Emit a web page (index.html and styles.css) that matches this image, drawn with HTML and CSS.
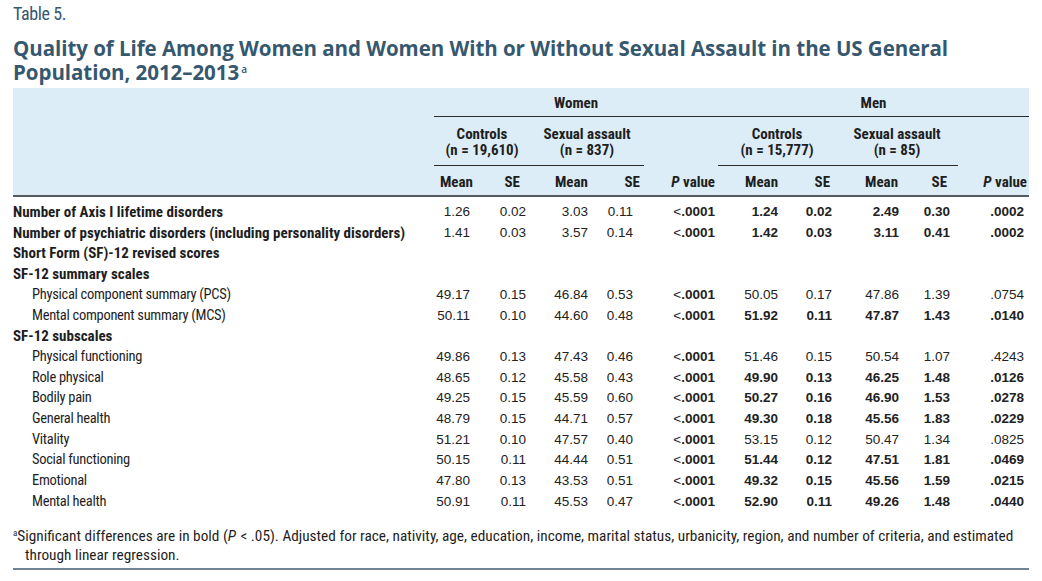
FILE: index.html
```html
<!DOCTYPE html>
<html lang="en">
<head>
<meta charset="utf-8">
<title>Table 5</title>
<link rel="stylesheet" href="styles.css">
</head>
<body>
<div class="page">
  <div class="table-label">Table 5.</div>
  <h1 class="title">Quality of Life Among Women and Women With or Without Sexual Assault in the US General Population, 2012–2013<sup>a</sup></h1>
  <table class="data">
    <colgroup>
      <col class="c-label">
      <col class="c1"><col class="c2"><col class="c3"><col class="c4"><col class="c5">
      <col class="c6"><col class="c7"><col class="c8"><col class="c9"><col class="c10">
    </colgroup>
    <thead>
      <tr class="h1">
        <th></th>
        <th colspan="5" class="grp g-women"><div class="rule">Women</div></th>
        <th colspan="5" class="grp g-men"><div class="rule">Men</div></th>
      </tr>
      <tr class="h2">
        <th></th>
        <th colspan="2" class="grp g-wc"><div class="rule">Controls<br>(n = 19,610)</div></th>
        <th colspan="2" class="grp g-ws"><div class="rule">Sexual assault<br>(n = 837)</div></th>
        <th></th>
        <th colspan="2" class="grp g-mc"><div class="rule">Controls<br>(n = 15,777)</div></th>
        <th colspan="2" class="grp g-ms"><div class="rule">Sexual assault<br>(n = 85)</div></th>
        <th></th>
      </tr>
      <tr class="h3">
        <th></th>
        <th class="k1">Mean</th><th class="k2">SE</th><th class="k3">Mean</th><th class="k4">SE</th><th class="k5"><i>P</i> value</th>
        <th class="k6">Mean</th><th class="k7">SE</th><th class="k8">Mean</th><th class="k9">SE</th><th class="k10"><i>P</i> value</th>
      </tr>
    </thead>
    <tbody>
      <tr>
        <td class="lab b">Number of Axis I lifetime disorders</td>
        <td class="n1">1.26</td><td class="n2">0.02</td><td class="n3">3.03</td><td class="n4">0.11</td><td class="n5">&lt;<b>.0001</b></td>
        <td class="n6 b">1.24</td><td class="n7 b">0.02</td><td class="n8 b">2.49</td><td class="n9 b">0.30</td><td class="n10 b">.0002</td>
      </tr>
      <tr>
        <td class="lab b">Number of psychiatric disorders (including personality disorders)</td>
        <td class="n1">1.41</td><td class="n2">0.03</td><td class="n3">3.57</td><td class="n4">0.14</td><td class="n5">&lt;<b>.0001</b></td>
        <td class="n6 b">1.42</td><td class="n7 b">0.03</td><td class="n8 b">3.11</td><td class="n9 b">0.41</td><td class="n10 b">.0002</td>
      </tr>
      <tr>
        <td class="lab b" colspan="11">Short Form (SF)-12 revised scores</td>
      </tr>
      <tr>
        <td class="lab b" colspan="11">SF-12 summary scales</td>
      </tr>
      <tr>
        <td class="lab ind">Physical component summary (PCS)</td>
        <td class="n1">49.17</td><td class="n2">0.15</td><td class="n3">46.84</td><td class="n4">0.53</td><td class="n5">&lt;<b>.0001</b></td>
        <td class="n6">50.05</td><td class="n7">0.17</td><td class="n8">47.86</td><td class="n9">1.39</td><td class="n10">.0754</td>
      </tr>
      <tr>
        <td class="lab ind">Mental component summary (MCS)</td>
        <td class="n1">50.11</td><td class="n2">0.10</td><td class="n3">44.60</td><td class="n4">0.48</td><td class="n5">&lt;<b>.0001</b></td>
        <td class="n6 b">51.92</td><td class="n7 b">0.11</td><td class="n8 b">47.87</td><td class="n9 b">1.43</td><td class="n10 b">.0140</td>
      </tr>
      <tr>
        <td class="lab b" colspan="11">SF-12 subscales</td>
      </tr>
      <tr>
        <td class="lab ind">Physical functioning</td>
        <td class="n1">49.86</td><td class="n2">0.13</td><td class="n3">47.43</td><td class="n4">0.46</td><td class="n5">&lt;<b>.0001</b></td>
        <td class="n6">51.46</td><td class="n7">0.15</td><td class="n8">50.54</td><td class="n9">1.07</td><td class="n10">.4243</td>
      </tr>
      <tr>
        <td class="lab ind">Role physical</td>
        <td class="n1">48.65</td><td class="n2">0.12</td><td class="n3">45.58</td><td class="n4">0.43</td><td class="n5">&lt;<b>.0001</b></td>
        <td class="n6 b">49.90</td><td class="n7 b">0.13</td><td class="n8 b">46.25</td><td class="n9 b">1.48</td><td class="n10 b">.0126</td>
      </tr>
      <tr>
        <td class="lab ind">Bodily pain</td>
        <td class="n1">49.25</td><td class="n2">0.15</td><td class="n3">45.59</td><td class="n4">0.60</td><td class="n5">&lt;<b>.0001</b></td>
        <td class="n6 b">50.27</td><td class="n7 b">0.16</td><td class="n8 b">46.90</td><td class="n9 b">1.53</td><td class="n10 b">.0278</td>
      </tr>
      <tr>
        <td class="lab ind">General health</td>
        <td class="n1">48.79</td><td class="n2">0.15</td><td class="n3">44.71</td><td class="n4">0.57</td><td class="n5">&lt;<b>.0001</b></td>
        <td class="n6 b">49.30</td><td class="n7 b">0.18</td><td class="n8 b">45.56</td><td class="n9 b">1.83</td><td class="n10 b">.0229</td>
      </tr>
      <tr>
        <td class="lab ind">Vitality</td>
        <td class="n1">51.21</td><td class="n2">0.10</td><td class="n3">47.57</td><td class="n4">0.40</td><td class="n5">&lt;<b>.0001</b></td>
        <td class="n6">53.15</td><td class="n7">0.12</td><td class="n8">50.47</td><td class="n9">1.34</td><td class="n10">.0825</td>
      </tr>
      <tr>
        <td class="lab ind">Social functioning</td>
        <td class="n1">50.15</td><td class="n2">0.11</td><td class="n3">44.44</td><td class="n4">0.51</td><td class="n5">&lt;<b>.0001</b></td>
        <td class="n6 b">51.44</td><td class="n7 b">0.12</td><td class="n8 b">47.51</td><td class="n9 b">1.81</td><td class="n10 b">.0469</td>
      </tr>
      <tr>
        <td class="lab ind">Emotional</td>
        <td class="n1">47.80</td><td class="n2">0.13</td><td class="n3">43.53</td><td class="n4">0.51</td><td class="n5">&lt;<b>.0001</b></td>
        <td class="n6 b">49.32</td><td class="n7 b">0.15</td><td class="n8 b">45.56</td><td class="n9 b">1.59</td><td class="n10 b">.0215</td>
      </tr>
      <tr>
        <td class="lab ind">Mental health</td>
        <td class="n1">50.91</td><td class="n2">0.11</td><td class="n3">45.53</td><td class="n4">0.47</td><td class="n5">&lt;<b>.0001</b></td>
        <td class="n6 b">52.90</td><td class="n7 b">0.11</td><td class="n8 b">49.26</td><td class="n9 b">1.48</td><td class="n10 b">.0440</td>
      </tr>
    </tbody>
  </table>
  <p class="footnote"><sup>a</sup>Significant differences are in bold (<i>P</i> &lt; .05). Adjusted for race, nativity, age, education, income, marital status, urbanicity, region, and number of criteria, and estimated through linear regression.</p>
</div>
</body>
</html>
```

FILE: styles.css
```css
html, body {
  margin: 0;
  padding: 0;
  background: #ffffff;
}

.page {
  width: 1016px;
  padding: 4px 0 0 13px;
  color: #1f1f1f;
  font-family: "Roboto", "DejaVu Sans Condensed", sans-serif;
  font-stretch: condensed;
}

.table-label {
  font-size: 18px;
  line-height: 20px;
  height: 20px;
  color: #36586f;
  letter-spacing: -0.4px;
}

.title {
  margin: 12px 0 0 0;
  font-family: "Open Sans", "Liberation Sans", sans-serif;
  font-stretch: normal;
  font-weight: 700;
  font-size: 20.5px;
  line-height: 24px;
  color: #36586f;
  letter-spacing: -0.05px;
}

.title sup {
  margin-left: 2px;
  font-size: 10px;
  line-height: 0;
  vertical-align: 7px;
  font-weight: 600;
}

.data {
  margin-top: 4px;
  width: 1016px;
  table-layout: fixed;
  border-collapse: separate;
  border-spacing: 0;
}

.c-label { width: 421px; }
.c1 { width: 40px; }
.c2 { width: 56px; }
.c3 { width: 62px; }
.c4 { width: 52px; }
.c5 { width: 74px; }
.c6 { width: 64px; }
.c7 { width: 54px; }
.c8 { width: 67px; }
.c9 { width: 55px; }
.c10 { width: 71px; }

.data thead {
  background: #dcedf7;
}

.data th {
  padding: 0;
  font-weight: 700;
  font-size: 15px;
  line-height: 16px;
  color: #1e1e1e;
  white-space: nowrap;
  vertical-align: bottom;
}

.grp { text-align: center; }
.grp .rule { border-bottom: 1px solid #2b2b2b; }

.h1 th { padding-top: 7px; }
.h1 .rule { padding-bottom: 5px; }
.g-women { padding-left: 3px; padding-right: 2px; }
.g-men { padding-left: 24px; padding-right: 0; }

.h2 th { padding-top: 9px; }
.h2 .rule { padding-bottom: 7px; }
.g-wc { padding-left: 3px; padding-right: 2px; }
.g-ws { padding-left: 24px; padding-right: 0; }
.g-mc { padding-left: 24px; padding-right: 0; }
.g-ms { padding-left: 27px; padding-right: 1px; }

.h3 th {
  padding-top: 8px;
  padding-bottom: 5px;
  border-bottom: 2px solid #555a5e;
  text-align: right;
}
.h3 th i { font-style: italic; }

.k1 { padding-right: 1px !important; }
.k2 { padding-right: 10px !important; }
.k3 { padding-right: 4px !important; }
.k4 { padding-right: 4px !important; }
.k5 { padding-right: 3px !important; }
.k6 { padding-right: 4px !important; }
.k7 { padding-right: 6px !important; }
.k8 { padding-right: 5px !important; }
.k9 { padding-right: 11px !important; }
.k10 { padding-right: 2px !important; }

.data td {
  padding: 0;
  height: 20.7px;
  line-height: 20.7px;
  white-space: nowrap;
  font-family: "Liberation Sans", Arial, sans-serif;
  font-stretch: normal;
  font-size: 13.5px;
  color: #222222;
  text-align: right;
}

.data tbody tr:first-child td { padding-top: 5px; }

.data td.lab {
  text-align: left;
  font-family: "Roboto", "DejaVu Sans Condensed", sans-serif;
  font-stretch: condensed;
  font-size: 15px;
  color: #1e1e1e;
}

.data td.b { font-weight: 700; }
.data td.ind {
  padding-left: 19px;
  font-size: 14.5px;
  letter-spacing: -0.3px;
}

.n1 { padding-right: 4px !important; }
.n2 { padding-right: 4px !important; }
.n3 { padding-right: 4px !important; }
.n4 { padding-right: 11px !important; }
.n5 { padding-right: 3px !important; }
.n6 { padding-right: 4px !important; }
.n7 { padding-right: 4px !important; }
.n8 { padding-right: 4px !important; }
.n9 { padding-right: 8px !important; }
.n10 { padding-right: 5px !important; }

.n5 b { font-weight: 700; }

.footnote {
  margin: 14px 0 0 0;
  padding: 0 0 3px 12px;
  text-indent: -12px;
  font-size: 15.3px;
  line-height: 19px;
  color: #1e1e1e;
  border-bottom: 2px solid #6f8595;
}

.footnote i {
  padding-right: 1px;
}

.footnote sup {
  font-size: 9px;
  line-height: 0;
  vertical-align: 5px;
}
```
